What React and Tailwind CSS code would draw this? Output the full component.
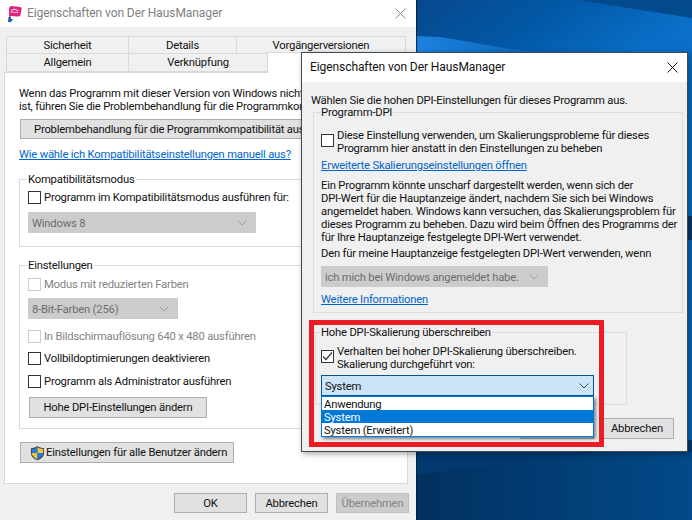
import React from "react";

const Check = ({ on, off }) => (
  <span className={"w-[13px] h-[13px] border shrink-0 flex items-center justify-center " + (off ? "border-[#cccccc] bg-white" : "border-[#333333] bg-white")}>
    {on && (
      <svg width="11" height="11" viewBox="0 0 11 11" fill="none">
        <path d="M1 5.5 L4 8.5 L10 1.5" stroke="#333" strokeWidth="1.2" />
      </svg>
    )}
  </span>
);

const Row = ({ label, off, className = "" }) => (
  <div className={"flex items-center h-[13px] " + className}>
    <Check off={off} />
    <span className={"ml-[3px] whitespace-nowrap " + (off ? "text-[#838383]" : "")}>{label}</span>
  </div>
);

const Chevron = ({ color = "#a0a0a0" }) => (
  <svg width="10" height="6" viewBox="0 0 10 6" fill="none">
    <path d="M0.5 0.5 L5 5 L9.5 0.5" stroke={color} strokeWidth="1" />
  </svg>
);

const DisabledSelect = ({ text, w, className = "" }) => (
  <div className={"h-[21px] bg-[#cccccc] flex items-center justify-between pl-[4px] pr-[9px] text-[#6d6d6d] " + w + " " + className}>
    <span className="whitespace-nowrap pt-px">{text}</span>
    <Chevron />
  </div>
);

const Btn = ({ children, className = "" }) => (
  <div className={"h-[21px] bg-[#e1e1e1] border border-[#adadad] flex items-center justify-center whitespace-nowrap " + className}>{children}</div>
);

const Link = ({ children, className = "" }) => (
  <div className={"text-[#0066cc] underline whitespace-nowrap " + className}>{children}</div>
);

const Close = ({ color }) => (
  <svg width="11" height="11" viewBox="0 0 11 11" fill="none">
    <path d="M0.5 0.5 L10.5 10.5 M10.5 0.5 L0.5 10.5" stroke={color} strokeWidth="1" />
  </svg>
);

const Tab = ({ children, className = "" }) => (
  <div className={"h-[18px] border border-[#d9d9d9] -ml-px first:ml-0 flex items-center justify-center bg-[#f0f0f0] whitespace-nowrap " + className}>{children}</div>
);

const Wallpaper = () => (
  <svg className="absolute inset-0" width="692" height="520" viewBox="0 0 692 520">
    <defs>
      <linearGradient id="top" x1="0" y1="0" x2="1" y2="0.3">
        <stop offset="0" stopColor="#07488c" />
        <stop offset="0.5" stopColor="#0258a6" />
        <stop offset="1" stopColor="#0a6fc8" />
      </linearGradient>
      <linearGradient id="bot" x1="0" y1="0" x2="1" y2="0">
        <stop offset="0" stopColor="#02305f" />
        <stop offset="1" stopColor="#024a8a" />
      </linearGradient>
      <linearGradient id="streak" x1="0" y1="0" x2="1" y2="0">
        <stop offset="0" stopColor="#1c82de" />
        <stop offset="1" stopColor="#0a66bb" />
      </linearGradient>
    </defs>
    <rect x="416" y="0" width="276" height="60" fill="url(#top)" />
    <polygon points="578,0 692,0 692,18" fill="#024a8c" />
    <polygon points="416,36 440,37 530,52 416,52" fill="url(#streak)" />
    <rect x="680" y="52" width="12" height="170" fill="#0a6fc4" />
    <rect x="680" y="216" width="12" height="24" fill="#06386b" />
    <rect x="680" y="240" width="12" height="220" fill="#0868bb" />
    <rect x="416" y="450" width="276" height="70" fill="url(#bot)" />
    <polygon points="416,475 692,440 692,452 416,452" fill="#023a70" />
  </svg>
);

const AppIcon = () => (
  <svg width="17" height="17" viewBox="0 0 17 17" className="shrink-0">
    <path d="M3 4 Q3 1 6 1 L14 2 Q16 2 15.5 5 L14.5 10 Q14 12 11 11.5 L5 11 L3 13 Z" fill="#e0257f" />
    <path d="M5 6 Q8 2.5 12 6" stroke="#ffffff" strokeWidth="1" fill="none" />
    <path d="M4.5 7 L12.5 7.5" stroke="#f7b6d4" strokeWidth="1" fill="none" />
    <path d="M2 17 L2.5 12 L5 12 L5 14 L7 14 L5 17 Z" fill="#1f5fb5" />
  </svg>
);

const Shield = () => (
  <svg width="15" height="16" viewBox="0 0 16 16" className="shrink-0">
    <path d="M8 0.5 C6 2 3.5 2.8 1 2.8 L1 8 C1 12 4.5 14.5 8 15.8 C11.5 14.5 15 12 15 8 L15 2.8 C12.5 2.8 10 2 8 0.5 Z" fill="#39465a" />
    <path d="M8 1.8 C6.2 3 4 3.6 2 3.7 L2 8 L8 8 Z" fill="#1e7ed8" />
    <path d="M8 1.8 C9.8 3 12 3.6 14 3.7 L14 8 L8 8 Z" fill="#f6c43a" />
    <path d="M2 8 L8 8 L8 14.6 C5 13.4 2.2 11.4 2 8 Z" fill="#f6c43a" />
    <path d="M14 8 L8 8 L8 14.6 C11 13.4 13.8 11.4 14 8 Z" fill="#1e7ed8" />
  </svg>
);

const Fieldset = ({ label, className = "", children }) => (
  <fieldset className={"border border-[#dcdcdc] " + className}>
    <legend className="h-[13px] leading-[13px] px-[1px] -ml-px whitespace-nowrap">{label}</legend>
    {children}
  </fieldset>
);

export default function App() {
  return (
    <div className="relative w-[692px] h-[520px] overflow-hidden bg-[#0a5aa8] text-[#111111] text-[11.25px] tracking-[-0.2px] leading-[13px] [font-family:'Roboto','Liberation_Sans',sans-serif]">
      <Wallpaper />

      {/* back window */}
      <div className="absolute z-0 left-0 top-0 w-[416px] h-[520px] bg-[#f0f0f0] shadow-[1px_0_1px_rgba(0,30,60,0.8)] flex flex-col">
        <div className="h-[27px] bg-white flex items-center justify-between pl-[6px] pr-[10px]">
          <div className="flex items-center gap-[4px]">
            <AppIcon />
            <span className="text-[#7f7f7f] text-[12px] tracking-[-0.08px]">Eigenschaften von Der HausManager</span>
          </div>
          <Close color="#8a8a8a" />
        </div>
        <div className="pl-[6px] pt-[9px]">
          <div className="flex">
            <Tab className="w-[123px]">Sicherheit</Tab>
            <Tab className="w-[109px]">Details</Tab>
            <Tab className="w-[170px]">Vorgängerversionen</Tab>
          </div>
          <div className="flex items-end">
            <Tab className="w-[123px] border-t-0">Allgemein</Tab>
            <Tab className="w-[140px] border-t-0">Verknüpfung</Tab>
            <div className="w-[142px] h-[21px] -mt-[2px] -mb-px -ml-px bg-white border-x border-t border-[#d9d9d9] relative z-10" />
          </div>
        </div>
        <div className="ml-[4px] w-[404px] h-[412px] bg-white border border-[#d9d9d9] pl-[14px] pt-[14px] overflow-hidden">
          <div className="whitespace-nowrap">Wenn das Programm mit dieser Version von Windows nicht</div>
          <div className="whitespace-nowrap">ist, führen Sie die Problembehandlung für die Programmkompatibilität</div>
          <Btn className="mt-[6px] ml-px w-[370px] !h-[20px] !justify-start pl-[13px]">Problembehandlung für die Programmkompatibilität ausführen</Btn>
          <Link className="mt-[9px]">Wie wähle ich Kompatibilitätseinstellungen manuell aus?</Link>
          <Fieldset label="Kompatibilitätsmodus" className="mt-[12px] w-[380px] h-[74px] pl-[8px]">
            <Row className="mt-[5px]" label="Programm im Kompatibilitätsmodus ausführen für:" />
            <DisabledSelect text="Windows 8" w="w-[228px]" className="mt-[8px]" />
          </Fieldset>
          <Fieldset label="Einstellungen" className="mt-[12px] w-[380px] h-[170px] pl-[8px]">
            <Row off className="mt-[6px]" label="Modus mit reduzierten Farben" />
            <DisabledSelect text="8-Bit-Farben (256)" w="w-[150px]" className="mt-[7px]" />
            <Row off className="mt-[11px]" label="In Bildschirmauflösung 640 x 480 ausführen" />
            <Row className="mt-[9px]" label="Vollbildoptimierungen deaktivieren" />
            <Row className="mt-[10px]" label="Programm als Administrator ausführen" />
            <Btn className="mt-[9px] ml-px w-[178px]">Hohe DPI-Einstellungen ändern</Btn>
          </Fieldset>
          <Btn className="mt-[13px] ml-px w-[214px] gap-[1px] !justify-start pl-[9px]"><Shield />Einstellungen für alle Benutzer ändern</Btn>
        </div>
        <div className="flex justify-end gap-[8px] pr-[7px] mt-[9px]">
          <Btn className="w-[73px] !h-[20px]">OK</Btn>
          <Btn className="w-[73px] !h-[20px]">Abbrechen</Btn>
          <Btn className="w-[73px] !h-[20px] !bg-[#cccccc] !border-[#bfbfbf] text-[#838383]">Übernehmen</Btn>
        </div>
      </div>

      {/* front window */}
      <div className="absolute z-10 left-[301px] top-[52px] w-[387px] h-[400px] bg-[#f0f0f0] border border-[#3c4a58] shadow-[2px_2px_6px_rgba(0,0,0,0.35)]">
        <div className="h-[29px] bg-white flex items-center justify-between pl-[8px] pr-[9px]">
          <span className="text-[12px] tracking-[-0.08px]">Eigenschaften von Der HausManager</span>
          <Close color="#111111" />
        </div>
        <div className="pl-[11px]">
          <div className="mt-[12px] -ml-[2px] whitespace-nowrap">Wählen Sie die hohen DPI-Einstellungen für dieses Programm aus.</div>
          <Fieldset label="Programm-DPI" className="-mt-px w-[370px] pl-[7px]">
            <div className="mt-[10px] flex">
              <span className="mt-[5px]"><Check /></span>
              <div className="ml-[3px] whitespace-nowrap">
                <div>Diese Einstellung verwenden, um Skalierungsprobleme für dieses</div>
                <div>Programm hier anstatt in den Einstellungen zu beheben</div>
              </div>
            </div>
            <Link className="mt-[4px]">Erweiterte Skalierungseinstellungen öffnen</Link>
            <div className="mt-[7px] whitespace-nowrap">
              <div>Ein Programm könnte unscharf dargestellt werden, wenn sich der</div>
              <div>DPI-Wert für die Hauptanzeige ändert, nachdem Sie sich bei Windows</div>
              <div>angemeldet haben. Windows kann versuchen, das Skalierungsproblem für</div>
              <div>dieses Programm zu beheben. Dazu wird beim Öffnen des Programms der</div>
              <div>für Ihre Hauptanzeige festgelegte DPI-Wert verwendet.</div>
            </div>
            <div className="mt-[3px] whitespace-nowrap">Den für meine Hauptanzeige festgelegten DPI-Wert verwenden, wenn</div>
            <DisabledSelect text="ich mich bei Windows angemeldet habe." w="w-[227px]" className="mt-[6px]" />
            <Link className="mt-[6px] mb-[6px]">Weitere Informationen</Link>
          </Fieldset>
          <Fieldset label="Hohe DPI-Skalierung überschreiben" className="mt-[13px] ml-[2px] w-[312px] pl-[5px] h-[79px]">
            <div className="mt-[6px] flex">
              <span className="mt-[5px]"><Check on /></span>
              <div className="ml-[3px] whitespace-nowrap">
                <div>Verhalten bei hoher DPI-Skalierung überschreiben.</div>
                <div>Skalierung durchgeführt von:</div>
              </div>
            </div>
            <div className="relative mt-[4px] w-[273px] z-20">
              <div className="h-[21px] bg-[#cce4f7] border border-[#005499] flex items-center justify-between pl-[3px] pr-[4px]">
                <span className="pt-px">System</span>
                <Chevron color="#444444" />
              </div>
              <div className="absolute left-0 top-[21px] w-[273px] border border-[#0078d7] bg-white shadow-[2px_2px_3px_rgba(0,0,0,0.45)]">
                <div className="h-[13px] pl-[2px] pt-px">Anwendung</div>
                <div className="h-[13px] pl-[2px] pt-px bg-[#0078d7] text-white">System</div>
                <div className="h-[13px] pl-[2px] pt-px">System (Erweitert)</div>
              </div>
            </div>
          </Fieldset>
          <div className="flex justify-end gap-[6px] mt-[13px] pr-[13px]">
            <Btn className="w-[74px]">OK</Btn>
            <Btn className="w-[74px]">Abbrechen</Btn>
          </div>
        </div>
      </div>

      {/* red highlight */}
      <div className="absolute left-[309px] top-[320px] w-[295px] h-[127px] border-[5px] border-[#ed1c24] z-30 pointer-events-none" />
    </div>
  );
}
